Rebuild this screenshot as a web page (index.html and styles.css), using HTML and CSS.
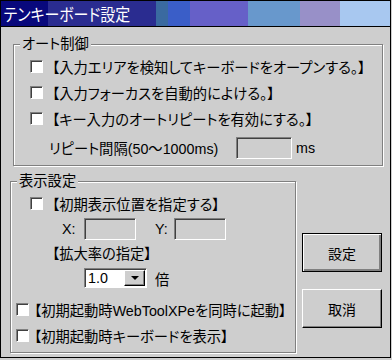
FILE: index.html
```html
<!DOCTYPE html>
<html lang="ja">
<head>
	<meta charset="UTF-8">
	<title>テンキーボード設定</title>
	<link rel="stylesheet" href="styles.css">
</head>
<body>

<div class="window">
	<div class="titlebar"><span class="caption">テンキーボード設定</span></div>

	<div class="client">
		<div class="group group-auto">
			<span class="legend">オート制御</span>
			<div class="row"><span class="check"></span><span>【入力エリアを検知してキーボードをオープンする。】</span></div>
			<div class="row"><span class="check"></span><span>【入力フォーカスを自動的によける。】</span></div>
			<div class="row"><span class="check"></span><span>【キー入力のオートリピートを有効にする。】</span></div>
			<div class="row repeat">
				<span class="repeat-label">リピート間隔(50～1000ms)</span>
				<span class="edit edit-ms"></span>
				<span class="unit">ms</span>
			</div>
		</div>

		<div class="lower">
			<div class="group group-view">
				<span class="legend">表示設定</span>
				<div class="row"><span class="check"></span><span>【初期表示位置を指定する】</span></div>
				<div class="row pos">
					<span class="pos-x">X:</span>
					<span class="edit edit-pos"></span>
					<span class="pos-y">Y:</span>
					<span class="edit edit-pos"></span>
				</div>
				<div class="row zoom-label">【拡大率の指定】</div>
				<div class="row zoom">
					<div class="combo">
						<span class="combo-value">1.0</span>
						<span class="combo-arrow"><span class="tri"></span></span>
					</div>
					<span class="unit-times">倍</span>
				</div>
				<div class="row outdent first-out"><span class="check"></span><span>【初期起動時WebToolXPeを同時に起動】</span></div>
				<div class="row outdent"><span class="check"></span><span>【初期起動時キーボードを表示】</span></div>
			</div>

			<div class="buttons">
				<button class="btn btn-default">設定</button>
				<button class="btn">取消</button>
			</div>
		</div>
	</div>
</div>

</body>
</html>
```

FILE: styles.css
```css
body {
	margin: 0;
	background: #cecece;
	font-family: "Liberation Sans", "Noto Sans CJK JP", sans-serif;
	font-size: 14.3px;
	font-feature-settings: "palt";
	color: #000;
}

.window {
	width: 389px;
	height: 356px;
	border: 1px solid #000;
	background: #cecece;
}

.titlebar {
	height: 25px;
	border-bottom: 1px solid #000;
	background: linear-gradient(to right,
		#08087c 0, #08087c 47px,
		#2a2c90 47px, #2a2c90 155px,
		#3a6aa0 155px, #3a6aa0 167px,
		#3a5ec8 167px, #3a5ec8 189px,
		#6660c8 189px, #6660c8 247px,
		#6898cc 247px, #6898cc 299px,
		#9890c8 299px, #9890c8 339px,
		#a8c8f0 339px, #a8c8f0 100%);
	overflow: hidden;
}

.caption {
	display: inline-block;
	padding-left: 3px;
	line-height: 25px;
	font-family: "Noto Sans CJK JP", sans-serif;
	font-size: 17px;
	color: #fff;
	white-space: nowrap;
	transform: scaleX(0.88);
	transform-origin: left center;
}

.client {
	padding: 17px 0 0 9px;
}

.group {
	position: relative;
	box-sizing: border-box;
	border: 1px solid #808080;
	box-shadow: inset 1px 1px 0 #fff, 1px 1px 0 #fff;
}

.legend {
	position: absolute;
	top: -9px;
	left: 6px;
	padding: 0 2px;
	line-height: 16px;
	background: #cecece;
}

.group-auto {
	margin-left: 3px;
	width: 370px;
	height: 122px;
	padding: 8px 0 0 16px;
}

.row {
	display: flex;
	align-items: center;
	height: 26px;
	white-space: nowrap;
}

.check {
	box-sizing: border-box;
	width: 13px;
	height: 13px;
	margin-right: 9px;
	background: #fff;
	border: 1px solid;
	border-color: #808080 #fff #fff #808080;
	box-shadow: inset 1px 1px 0 #404040;
	flex: none;
}

.edit {
	box-sizing: border-box;
	border: 1px solid;
	border-color: #808080 #fff #fff #808080;
	box-shadow: inset 1px 1px 0 #404040;
	background: #cecece;
	flex: none;
}

.repeat {
	margin-top: 5px;
	height: 23px;
	padding-left: 19px;
}

.repeat-label {
	width: 187px;
}

.edit-ms {
	width: 56px;
	height: 22px;
}

.unit {
	margin-left: 4px;
}

.lower {
	display: flex;
	margin-top: 15px;
}

.group-view {
	width: 286px;
	height: 172px;
	padding: 8px 0 0 19px;
	flex: none;
}

.pos {
	margin-top: 1px;
	height: 23px;
	padding-left: 32px;
}

.pos-x {
	width: 22px;
}

.pos-y {
	width: 19px;
	margin-left: 19px;
}

.edit-pos {
	width: 52px;
	height: 22px;
}

.zoom-label {
	height: 24px;
	padding-left: 22px;
}

.zoom {
	margin-top: 4px;
	height: 20px;
	padding-left: 54px;
}

.combo {
	display: flex;
	box-sizing: border-box;
	width: 63px;
	height: 20px;
	border: 1px solid;
	border-color: #808080 #fff #fff #808080;
	box-shadow: inset 1px 1px 0 #404040;
	background: #fff;
}

.combo-value {
	flex: 1;
	padding: 1px 0 0 3px;
	line-height: 17px;
}

.combo-arrow {
	display: flex;
	align-items: center;
	justify-content: center;
	box-sizing: border-box;
	width: 21px;
	height: 16px;
	margin: 1px 1px 0 0;
	background: #cecece;
	border: 1px solid;
	border-color: #fff #000 #000 #fff;
	box-shadow: inset -1px -1px 0 #808080;
}

.tri {
	width: 0;
	height: 0;
	border-left: 4px solid transparent;
	border-right: 4px solid transparent;
	border-top: 4px solid #000;
}

.unit-times {
	margin-left: 8px;
}

.outdent {
	margin-left: -14px;
}

.outdent .check {
	margin-right: 5px;
}

.first-out {
	margin-top: 8px;
}

.buttons {
	display: flex;
	flex-direction: column;
	gap: 17px;
	margin-left: 6px;
	padding-top: 52px;
}

.btn {
	box-sizing: border-box;
	width: 80px;
	height: 39px;
	padding: 0;
	background: #cecece;
	border: 1px solid;
	border-color: #fff #000 #000 #fff;
	box-shadow: inset -1px -1px 0 #808080;
	font-family: "Noto Sans CJK JP", sans-serif;
	font-size: 14px;
	color: #000;
}

.btn-default {
	border-color: #000;
	box-shadow: inset 1px 1px 0 #fff, inset -2px -2px 0 #808080;
}
```
